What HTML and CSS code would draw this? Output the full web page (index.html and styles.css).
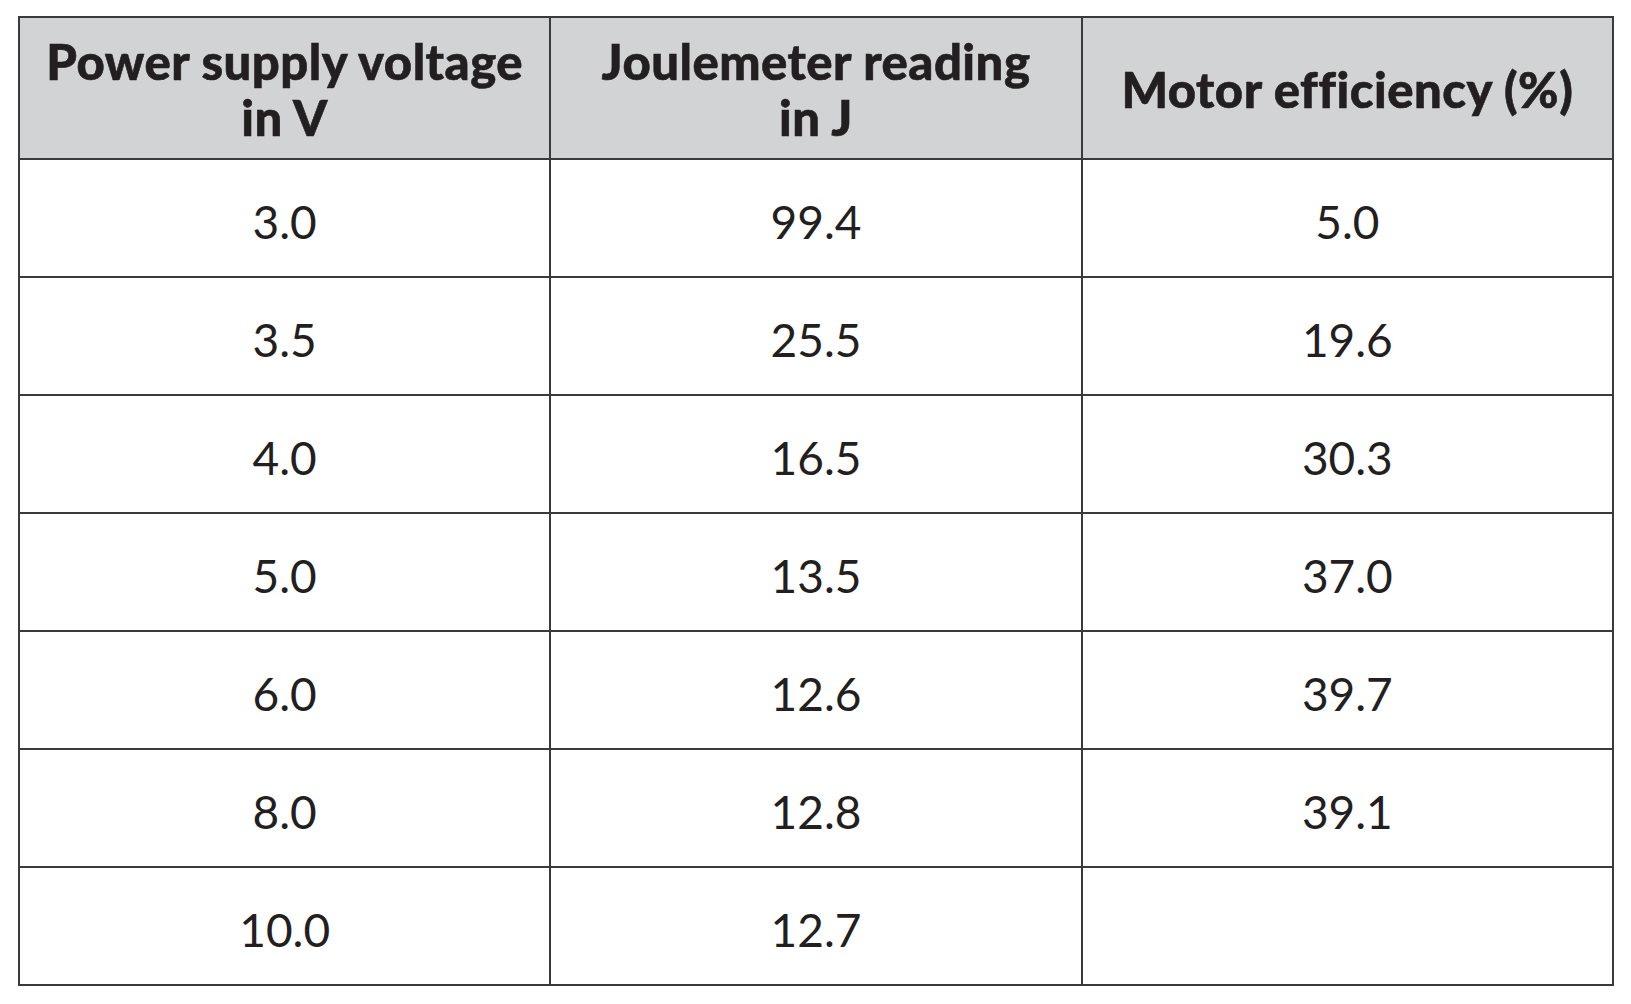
FILE: index.html
```html
<!DOCTYPE html>
<html>
<head>
<meta charset="utf-8">
<link rel="stylesheet" href="styles.css">
</head>
<body>
<div class="page">
<table class="data">
<thead>
<tr>
<th>Power supply voltage<br>in V</th>
<th>Joulemeter reading<br>in J</th>
<th>Motor efficiency (%)</th>
</tr>
</thead>
<tbody>
<tr><td>3.0</td><td>99.4</td><td>5.0</td></tr>
<tr><td>3.5</td><td>25.5</td><td>19.6</td></tr>
<tr><td>4.0</td><td>16.5</td><td>30.3</td></tr>
<tr><td>5.0</td><td>13.5</td><td>37.0</td></tr>
<tr><td>6.0</td><td>12.6</td><td>39.7</td></tr>
<tr><td>8.0</td><td>12.8</td><td>39.1</td></tr>
<tr><td>10.0</td><td>12.7</td><td></td></tr>
</tbody>
</table>
</div>
</body>
</html>
```
FILE: styles.css
```css
html, body {
  margin: 0;
  padding: 0;
  background: #ffffff;
}
.page {
  padding: 16px 18px;
}
.data {
  width: 1596px;
  table-layout: fixed;
  border-collapse: collapse;
  color: #231f20;
  font-family: "Lato", "Open Sans", sans-serif;
}
.data th,
.data td {
  border: 2px solid #3a3a3a;
  text-align: center;
  vertical-align: middle;
  padding: 0;
}
.data th {
  background: #d1d3d4;
  height: 138px;
  font-size: 49px;
  font-weight: 900;
  line-height: 56px;
  letter-spacing: 0.5px;
  padding-top: 2px;
  -webkit-text-stroke: 0.6px #231f20;
}
.data td {
  height: 110px;
  font-size: 46px;
  font-weight: 400;
  padding-top: 6px;
}
```
